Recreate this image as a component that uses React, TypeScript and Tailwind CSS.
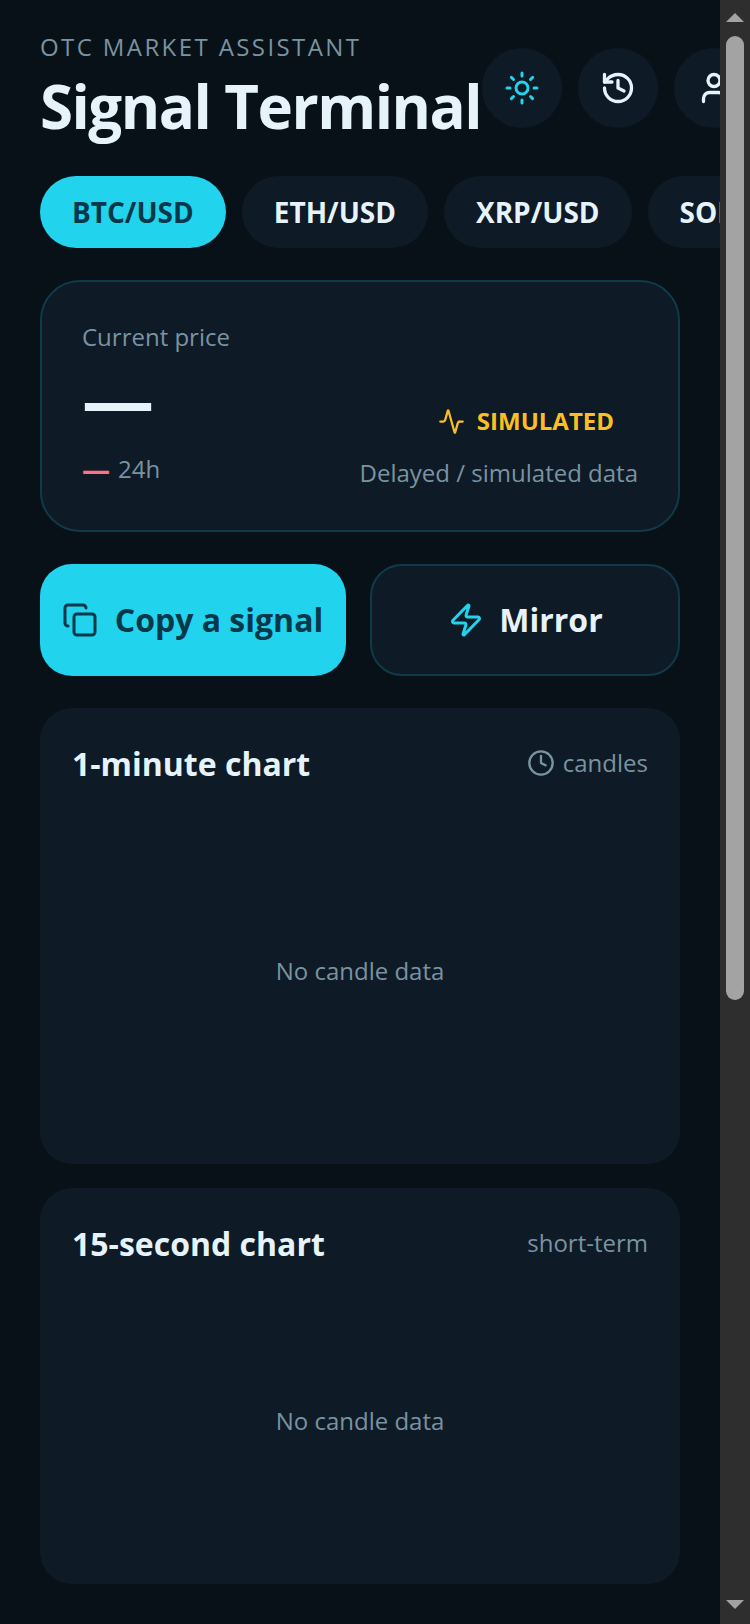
import { Activity, Clock, Copy, History, Sun, User, Zap } from "lucide-react";

const pairs = ["BTC/USD", "ETH/USD", "XRP/USD", "SOL/USD"];

const ChartCard = ({ title, height, children }: { title: string; height: string; children: React.ReactNode }) => (
  <div className={`${height} flex flex-col rounded-[32px] bg-[#0e1a25] px-8 pt-8`}>
    <div className="flex items-center justify-between">
      <h2 className="text-[32px] leading-[48px] font-bold text-[#e6f3fb]">{title}</h2>
      {children}
    </div>
    <div className="flex flex-1 items-center justify-center pb-[10px] text-[24px] text-[#7a93a1]">No candle data</div>
  </div>
);

const Scrollbar = () => (
  <div className="flex h-[1624px] w-[30px] shrink-0 flex-col items-center bg-[#2e2e2e]">
    <div className="mt-[13px] h-0 w-0 border-x-[9px] border-b-[9px] border-x-transparent border-b-[#a3a3a3]" />
    <div className="mt-[14px] h-[964px] w-[18px] rounded-[9px] bg-[#a3a3a3]" />
    <div className="mt-auto mb-[15px] h-0 w-0 border-x-[9px] border-t-[9px] border-x-transparent border-t-[#a3a3a3]" />
  </div>
);

export default function App() {
  return (
    <div className="flex h-[1624px] w-[750px] overflow-hidden bg-[#081117] font-['Open_Sans',sans-serif]">
      <main className="w-[720px] shrink-0 overflow-hidden px-10 pt-8">
        <header className="flex w-[800px] items-center">
          <div className="w-[442px] shrink-0">
            <p className="-mt-px text-[24px] leading-[32px] tracking-[2.4px] text-[#7a93a1]">OTC MARKET ASSISTANT</p>
            <h1 className="mt-[5px] text-[60px] leading-[76px] font-bold tracking-tight whitespace-nowrap text-[#e6f3fb]">Signal Terminal</h1>
          </div>
          <div className="flex gap-4">
            <button className="flex h-20 w-20 items-center justify-center rounded-full bg-[#0e1a25] text-[#22d3ee]">
              <Sun size={36} strokeWidth={2} />
            </button>
            <button className="flex h-20 w-20 items-center justify-center rounded-full bg-[#0e1a25] text-[#e6f3fb]">
              <History size={36} strokeWidth={2.2} />
            </button>
            <button className="flex h-20 w-20 items-center justify-center rounded-full bg-[#0e1a25] text-[#e6f3fb]">
              <User size={36} strokeWidth={2.2} />
            </button>
          </div>
        </header>

        <div className="mt-8 flex w-[800px] gap-4">
          {pairs.map((pair, index) => (
            <div
              key={pair}
              className={`flex h-[72px] items-center rounded-full px-8 text-[28px] font-bold ${
                index === 0 ? "bg-[#22d3ee] text-[#06384a]" : "bg-[#0e1a25] text-[#e6f3fb]"
              }`}
            >
              {pair}
            </div>
          ))}
        </div>

        <section className="mt-8 h-[252px] rounded-[40px] border-2 border-[#113a49] bg-[#0e1a25] px-10 pt-[39px]">
          <p className="text-[24px] leading-[32px] text-[#7a93a1]">Current price</p>
          <div className="mt-4 flex items-end justify-between">
            <div>
              <div className="-mt-[6px] h-[70px] text-[72px] leading-[70px] font-bold text-[#e6f3fb]">—</div>
              <div className="mt-[20px] flex items-center gap-2 text-[24px] leading-[32px] text-[#7a93a1]">
                <span className="text-[28px] font-bold text-[#fb7185]">—</span>
                24h
              </div>
            </div>
            <div className="flex flex-col items-end">
              <div className="mr-6 flex items-center gap-3 text-[24px] leading-[32px] font-bold text-[#fbbf24]">
                <Activity size={27} />
                SIMULATED
              </div>
              <p className="mt-5 -mb-1 text-[24px] leading-[32px] text-[#7a93a1]">Delayed / simulated data</p>
            </div>
          </div>
        </section>

        <div className="mt-8 flex gap-6">
          <button className="flex h-[112px] w-[306px] items-center justify-center gap-4 rounded-[32px] bg-[#22d3ee] text-[32px] font-bold text-[#06384a]">
            <Copy size={36} className="-translate-x-px" />
            Copy a signal
          </button>
          <button className="flex h-[112px] flex-1 items-center justify-center gap-4 rounded-[32px] border-2 border-[#113a49] bg-[#0e1a25] text-[32px] font-bold text-[#e6f3fb]">
            <Zap size={36} className="translate-x-px text-[#22d3ee]" />
            Mirror
          </button>
        </div>

        <div className="mt-8 flex flex-col gap-6">
          <ChartCard title="1-minute chart" height="h-[456px]">
            <span className="mb-[2px] flex items-center gap-2 text-[24px] text-[#7a93a1]">
              <Clock size={28} />
              candles
            </span>
          </ChartCard>
          <ChartCard title="15-second chart" height="h-[396px]">
            <span className="mb-[2px] text-[24px] text-[#7a93a1]">short-term</span>
          </ChartCard>
        </div>
      </main>
      <Scrollbar />
    </div>
  );
}
